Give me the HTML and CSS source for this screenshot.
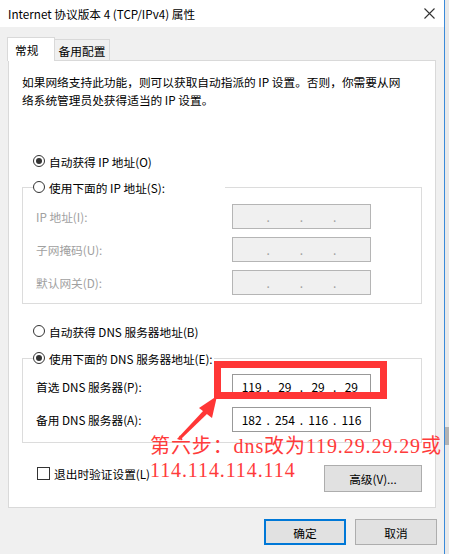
FILE: index.html
```html
<!DOCTYPE html>
<html lang="zh-CN">
<head>
<meta charset="utf-8">
<title>Internet 协议版本 4 (TCP/IPv4) 属性</title>
<link rel="stylesheet" href="styles.css">
</head>
<body>
<div class="desktop">
  <div class="window">
    <div class="titlebar">
      <span class="title">Internet 协议版本 4 (TCP/IPv4) 属性</span>
      <svg class="close" viewBox="0 0 11 11" width="11" height="11"><path d="M0.5 0.5 L10.5 10.5 M10.5 0.5 L0.5 10.5" stroke="#333" stroke-width="1.1" fill="none"/></svg>
    </div>
    <div class="body">
      <div class="tabs">
        <div class="tab active">常规</div>
        <div class="tab">备用配置</div>
      </div>
      <div class="panel">
        <p class="intro">如果网络支持此功能，则可以获取自动指派的 IP 设置。否则，你需要从网<br>络系统管理员处获得适当的 IP 设置。</p>
        <div class="option top-option"><span class="radio checked"></span>自动获得 IP 地址(O)</div>
        <fieldset class="group group-ip">
          <legend class="option legend-wide"><span class="radio"></span>使用下面的 IP 地址(S):</legend>
          <div class="fields disabled">
            <label>IP 地址(I):</label>
            <div class="ipbox off"><span class="seg"></span><span class="dot">.</span><span class="seg"></span><span class="dot">.</span><span class="seg"></span><span class="dot">.</span><span class="seg"></span></div>
            <label>子网掩码(U):</label>
            <div class="ipbox off"><span class="seg"></span><span class="dot">.</span><span class="seg"></span><span class="dot">.</span><span class="seg"></span><span class="dot">.</span><span class="seg"></span></div>
            <label>默认网关(D):</label>
            <div class="ipbox off"><span class="seg"></span><span class="dot">.</span><span class="seg"></span><span class="dot">.</span><span class="seg"></span><span class="dot">.</span><span class="seg"></span></div>
          </div>
        </fieldset>
        <div class="option dns-auto"><span class="radio"></span>自动获得 DNS 服务器地址(B)</div>
        <fieldset class="group group-dns">
          <legend class="option"><span class="radio checked"></span>使用下面的 DNS 服务器地址(E):</legend>
          <div class="fields">
            <label>首选 DNS 服务器(P):</label>
            <div class="ipbox"><span class="seg">119</span><span class="dot">.</span><span class="seg">29</span><span class="dot">.</span><span class="seg">29</span><span class="dot">.</span><span class="seg">29</span></div>
            <label>备用 DNS 服务器(A):</label>
            <div class="ipbox"><span class="seg">182</span><span class="dot">.</span><span class="seg">254</span><span class="dot">.</span><span class="seg">116</span><span class="dot">.</span><span class="seg">116</span></div>
          </div>
        </fieldset>
        <div class="footer-row">
          <label class="check"><span class="box"></span>退出时验证设置(L)</label>
          <button class="btn adv">高级(V)...</button>
        </div>
      </div>
      <div class="actions">
        <button class="btn primary">确定</button>
        <button class="btn">取消</button>
      </div>
    </div>
  </div>
  <div class="strip"><div class="thumb"></div></div>
  <svg class="annot" viewBox="0 0 449 554" width="449" height="554">
    <rect x="217.5" y="364.5" width="166" height="31" fill="none" stroke="#ff3636" stroke-width="7"/>
    <polygon points="177,439 180,440 208,413 204,410" fill="#ff3636"/>
    <polygon points="217,396 199,408 212,418" fill="#ff3636"/>
  </svg>
  <div class="note">第六步：dns改为119.29.29.29或<br>114.114.114.114</div>
</div>
</body>
</html>
```
FILE: styles.css
```css
body {
  margin: 0;
  font-family: "Noto Sans CJK SC", "Noto Sans", sans-serif;
  font-size: 11.7px;
  color: #000;
}

.desktop {
  position: relative;
  display: flex;
  width: 449px;
  height: 554px;
  background: #e9e9e9;
  overflow: hidden;
}

.window {
  width: 444px;
  flex-shrink: 0;
  border-right: 1px solid #3b8ad9;
  background: #f0f0f0;
  display: flex;
  flex-direction: column;
}

.strip {
  flex: 1;
}

.thumb {
  margin-top: 427px;
  height: 18px;
  background: #b3b3b3;
}

.titlebar {
  height: 27px;
  flex-shrink: 0;
  background: #fff;
  display: flex;
  align-items: center;
  justify-content: space-between;
  padding: 0 9px 0 8px;
}

.close {
  display: block;
}

.body {
  padding: 10px 8px 0;
}

.tabs {
  display: flex;
  align-items: flex-end;
  height: 23px;
}

.tab {
  box-sizing: border-box;
  height: 21px;
  width: 55px;
  border: 1px solid #d9d9d9;
  border-left: none;
  border-bottom: none;
  background: #f0f0f0;
  display: flex;
  align-items: center;
  justify-content: center;
}

.tab.active {
  width: 48px;
  height: 24px;
  margin: 0 0 -1px -1px;
  border-left: 1px solid #d9d9d9;
  background: #fff;
  justify-content: flex-start;
  padding-left: 7px;
  position: relative;
  z-index: 1;
}

.panel {
  background: #fff;
  border: 1px solid #d9d9d9;
  padding: 12px 13px 15px;
}

.intro {
  margin: 0;
  line-height: 18px;
}

.option {
  display: flex;
  align-items: center;
  gap: 4px;
  height: 20px;
}

.top-option {
  margin: 42px 0 0 11px;
}

.dns-auto {
  margin: 17px 0 0 11px;
}

.radio {
  width: 12px;
  height: 12px;
  box-sizing: border-box;
  border: 1px solid #333;
  border-radius: 50%;
  background: #fff;
  display: flex;
  align-items: center;
  justify-content: center;
  flex-shrink: 0;
}

.radio.checked::after {
  content: "";
  width: 6px;
  height: 6px;
  border-radius: 50%;
  background: #333;
}

.group {
  margin: 6px 0 0;
  padding: 7px 13px 8px;
  border: 1px solid #dcdcdc;
  min-inline-size: 0;
}

.group legend {
  padding: 0 1px 0 0;
  margin-left: -3px;
}

.legend-wide {
  width: 192px;
  box-sizing: border-box;
}

.group-dns {
  margin-top: 7px;
  padding: 6px 13px 10px;
}

.fields {
  display: grid;
  grid-template-columns: 196px 139px;
  row-gap: 8px;
  align-items: center;
}

.fields.disabled label {
  color: #a0a0a0;
}

.ipbox {
  height: 25px;
  box-sizing: border-box;
  border: 1px solid #999;
  background: #fff;
  display: flex;
  align-items: center;
  padding: 0 2px;
  font-size: 12px;
}

.ipbox.off {
  background: #f0f0f0;
  border-color: #b5b5b5;
}

.seg {
  flex: 1;
  text-align: center;
}

.dot {
  width: 6px;
  margin: 0 -3px;
  text-align: center;
}

.off .dot {
  color: #a0a0a0;
}

.footer-row {
  display: flex;
  justify-content: space-between;
  align-items: flex-start;
  margin-top: 22px;
}

.check {
  display: flex;
  align-items: center;
  gap: 4px;
  height: 16px;
  margin-left: 15px;
}

.box {
  width: 13px;
  height: 13px;
  box-sizing: border-box;
  border: 1px solid #333;
  background: #fff;
}

.btn {
  font: inherit;
  color: #000;
  background: #e1e1e1;
  border: 1px solid #adadad;
  padding: 0;
}

.adv {
  width: 98px;
  height: 27px;
}

.actions {
  display: flex;
  justify-content: flex-end;
  gap: 9px;
  margin: 11px -1px 0 0;
}

.actions .btn {
  width: 82px;
  height: 26px;
}

.actions .primary {
  border: 2px solid #0078d7;
}

.annot {
  position: absolute;
  left: 0;
  top: 0;
  pointer-events: none;
}

.note {
  position: absolute;
  left: 150px;
  top: 434px;
  font-family: "Liberation Serif", "Noto Sans CJK SC", serif;
  font-size: 20px;
  line-height: 24px;
  letter-spacing: 0.9px;
  color: #ff3b3b;
  white-space: nowrap;
}
```
